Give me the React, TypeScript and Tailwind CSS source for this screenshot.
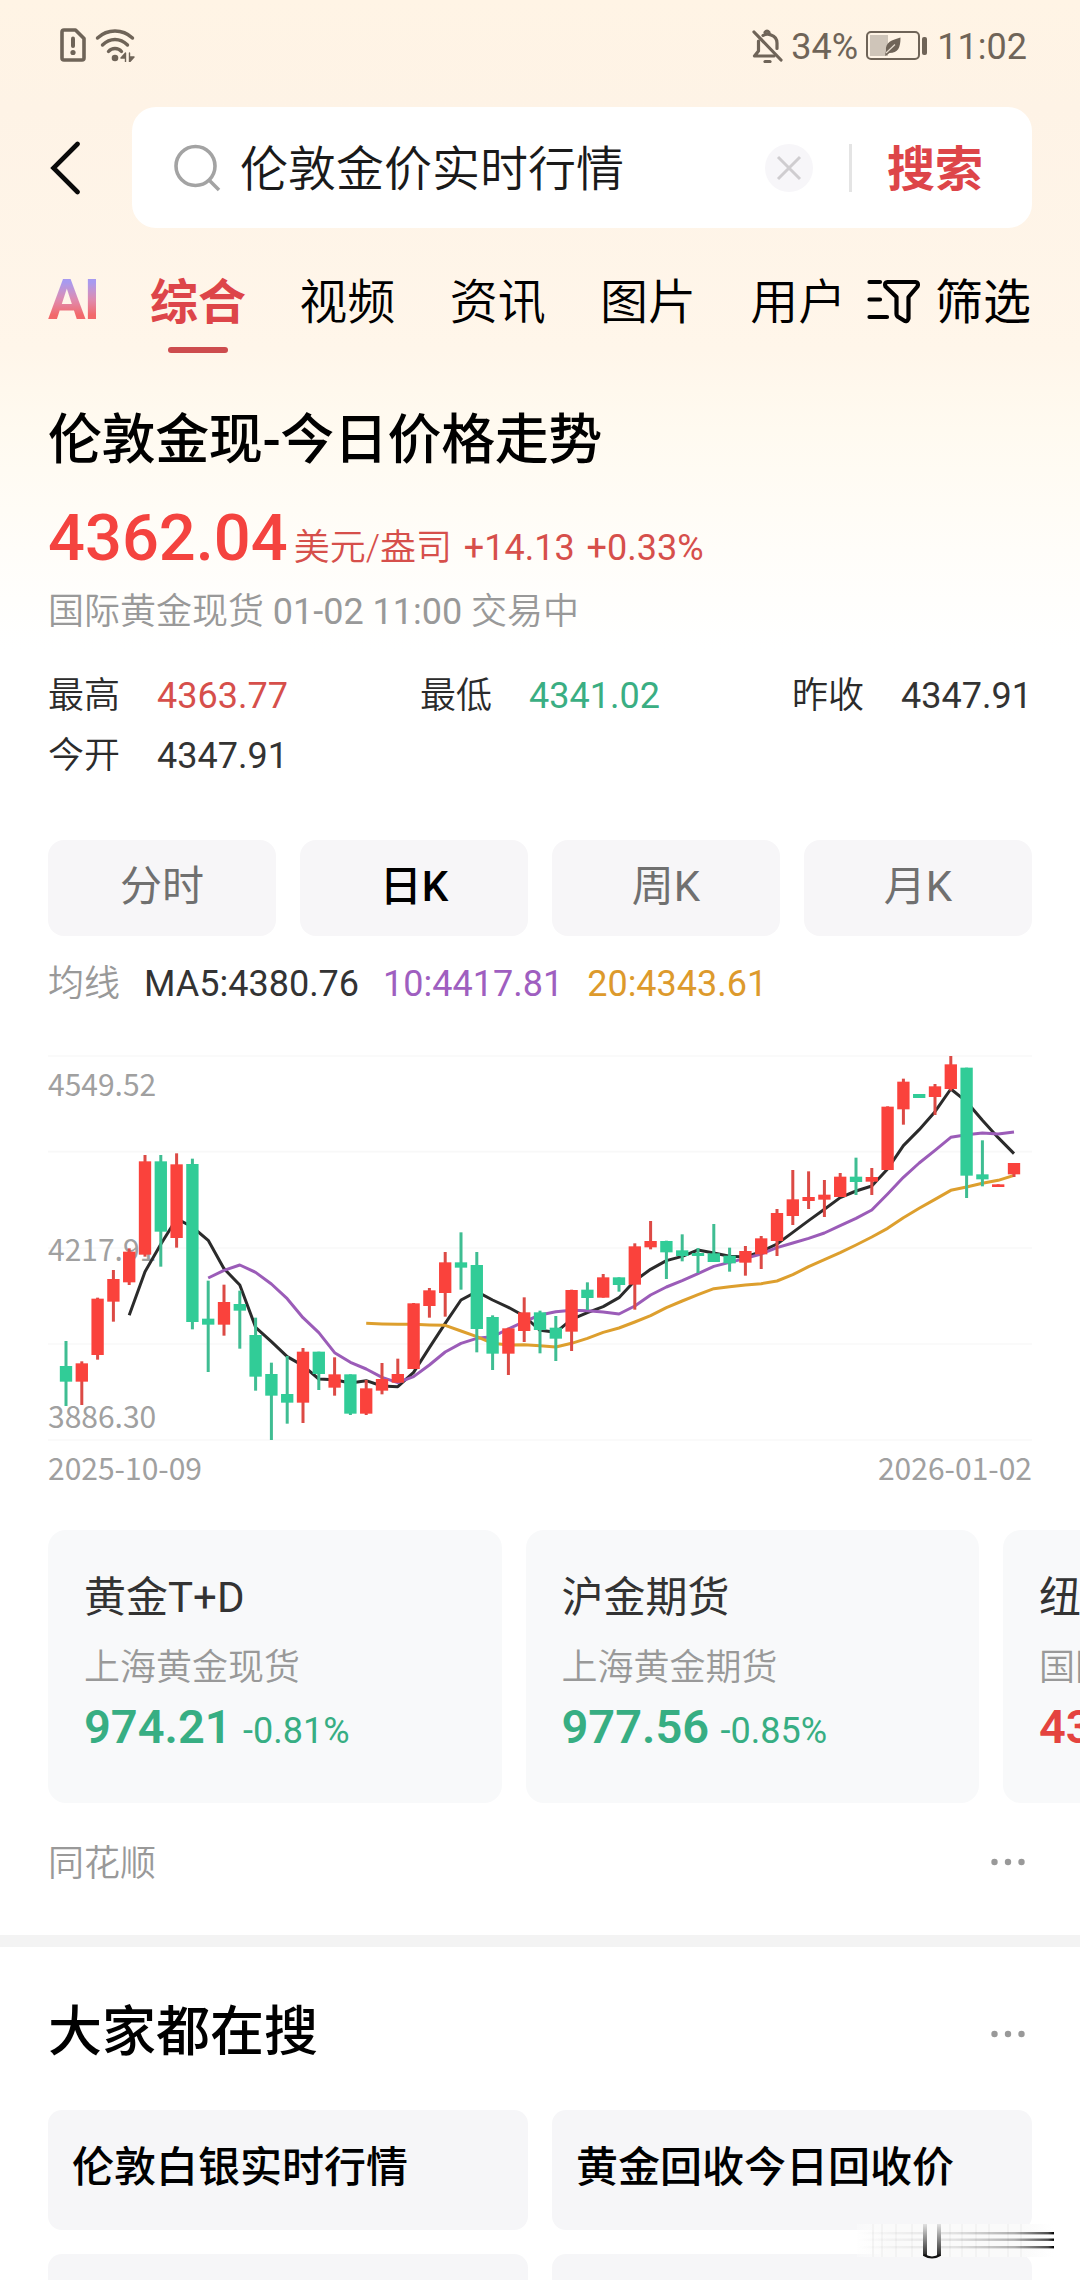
import React from "react";

const RED = "#fa423c";
const GREEN = "#31cc97";

// [high, body top, body bottom, low, rising]
const candles: [number, number, number, number, 0 | 1][] = [
  [903, 978, 1025, 1098, 0],
  [964, 970, 1025, 1095, 1],
  [773, 776, 945, 959, 1],
  [690, 717, 785, 845, 1],
  [625, 635, 727, 735, 1],
  [345, 364, 644, 650, 1],
  [345, 364, 575, 680, 0],
  [340, 373, 594, 623, 1],
  [356, 372, 846, 868, 0],
  [722, 836, 854, 996, 0],
  [734, 786, 854, 887, 1],
  [752, 792, 812, 926, 0],
  [833, 885, 1010, 1052, 0],
  [968, 1002, 1067, 1200, 0],
  [948, 1062, 1088, 1151, 0],
  [924, 935, 1088, 1149, 1],
  [935, 935, 1002, 1050, 0],
  [952, 1003, 1043, 1067, 1],
  [1003, 1003, 1121, 1125, 0],
  [1020, 1045, 1121, 1125, 1],
  [969, 1017, 1052, 1063, 1],
  [956, 1002, 1028, 1028, 1],
  [789, 790, 987, 987, 1],
  [744, 751, 798, 833, 1],
  [636, 667, 759, 830, 1],
  [577, 667, 683, 749, 0],
  [636, 675, 867, 937, 0],
  [826, 831, 941, 990, 0],
  [863, 865, 941, 1005, 1],
  [772, 817, 873, 906, 1],
  [812, 817, 870, 940, 0],
  [828, 863, 896, 963, 0],
  [749, 750, 875, 933, 1],
  [727, 749, 774, 810, 0],
  [702, 712, 773, 773, 1],
  [712, 712, 735, 755, 0],
  [610, 619, 734, 809, 1],
  [543, 603, 622, 628, 1],
  [602, 603, 637, 717, 0],
  [583, 631, 648, 664, 0],
  [624, 639, 648, 699, 0],
  [552, 640, 666, 666, 0],
  [623, 647, 670, 695, 0],
  [618, 633, 668, 707, 1],
  [588, 595, 643, 687, 1],
  [507, 519, 603, 648, 1],
  [390, 478, 528, 555, 1],
  [394, 471, 483, 507, 1],
  [420, 464, 479, 531, 1],
  [399, 410, 471, 471, 1],
  [353, 410, 426, 465, 0],
  [384, 411, 425, 465, 1],
  [199, 200, 390, 390, 1],
  [116, 125, 208, 254, 1],
  [162, 162, 174, 174, 0],
  [132, 139, 171, 225, 1],
  [48, 73, 147, 152, 1],
  [83, 83, 407, 474, 0],
  [301, 403, 418, 439, 0],
  [433, 433, 441, 441, 1],
  [369, 369, 403, 411, 1],
];

const ma5 = [
  826, 695, 613, 536, 561, 601, 686, 735, 862, 905, 950, 977, 1017, 1019, 1029,
  1022, 1038, 1040, 997, 923, 850, 780, 755, 780, 802, 828, 871, 877, 838, 818,
  800, 773, 722, 688, 662, 649, 630, 639, 649, 651, 635, 612, 577, 542, 508,
  473, 453, 438, 387, 317, 269, 215, 147, 185, 241, 293, 341,
];
const ma10 = [
  714, 691, 675, 697, 732, 776, 833, 878, 938, 967, 987, 1012, 1028, 1010, 975,
  936, 910, 895, 890, 867, 845, 825, 815, 811, 812, 816, 822, 798, 765, 741,
  722, 701, 679, 667, 655, 642, 623, 609, 595, 579, 557, 535, 510, 462, 412,
  369, 331, 292, 284, 279, 282, 276,
];
const ma20 = [
  850, 852, 853, 853, 855, 856, 873, 890, 910, 915, 914, 917, 921, 910, 895,
  877, 864, 846, 827, 803, 783, 764, 746, 740, 735, 731, 723, 704, 680, 659,
  638, 615, 591, 565, 533, 505, 478, 451, 441, 430, 421, 406,
];

const candleX = (i: number) => 198 + i * 47.4;

// every average ends on the last candle
const linePoints = (values: number[]) =>
  values
    .map((y, i) => `${candleX(i + candles.length - values.length)},${y}`)
    .join(" ");

const KLineChart = () => (
  <svg width="984" height="460" viewBox="144 0 2952 1380" className="block">
    {[48, 335, 624, 912, 1200].map((y) => (
      <line key={y} x1="144" x2="3096" y1={y} y2={y} stroke="#f8f8f8" strokeWidth="5" />
    ))}
    <g
      fill="#a0a0a0"
      fontSize="90"
      fontFamily="'Noto Sans CJK SC', 'Noto Sans', sans-serif"
    >
      <text x="144" y="167">4549.52</text>
      <text x="144" y="662">4217.91</text>
      <text x="144" y="1163">3886.30</text>
      <text x="144" y="1319">2025-10-09</text>
      <text x="3096" y="1319" textAnchor="end">2026-01-02</text>
    </g>
    <g fill="none" strokeWidth="9" strokeLinejoin="round">
      <polyline points={linePoints(ma5)} stroke="#2b2b2b" />
      <polyline points={linePoints(ma10)} stroke="#9b5cb8" />
      <polyline points={linePoints(ma20)} stroke="#dd9f2e" />
    </g>
    {candles.map(([high, top, bottom, low, rising], i) => (
      <g key={i} fill={rising ? RED : GREEN}>
        <rect
          x={candleX(i) - 4.5}
          y={high}
          width="9"
          height={low - high}
          fill={rising ? "#dc4a45" : "#3fbd92"}
        />
        <rect x={candleX(i) - 18.5} y={top} width="37" height={bottom - top} />
      </g>
    ))}
  </svg>
);

const StatusBar = () => (
  <div className="flex h-[92px] items-center justify-between pl-[60px] pr-[53px] text-[36px] text-[#6f6458]">
    <div className="flex items-center gap-[9px] pb-[3px]">
      <svg width="26" height="34" viewBox="0 0 26 34" fill="none" stroke="currentColor">
        <path d="M4 2H15.500L24 10.500V30Q24 32 22 32H4Q2 32 2 30V4Q2 2 4 2Z" strokeWidth="3.600" strokeLinejoin="round" />
        <path d="M13 10.500V18" strokeWidth="4" strokeLinecap="round" />
        <circle cx="13" cy="24.500" r="2.600" fill="currentColor" stroke="none" />
      </svg>
      <svg width="40" height="34" viewBox="0 0 40 34" fill="none" stroke="currentColor" strokeWidth="3.400" strokeLinecap="round">
        <path d="M2.500 10Q10 3 20 3T37.500 10" />
        <path d="M7.500 17Q13 11.500 20 11.500T32.500 17" />
        <path d="M13.500 23.500Q16 20.500 20 20.500T26.500 23.500" />
        <circle cx="20" cy="30" r="3.300" fill="currentColor" stroke="none" />
        <path d="M30.500 25V34M30.500 25L26 30H30.500ZM34.500 34V25M34.500 34L39 29H34.500Z" fill="currentColor" strokeWidth="1.400" strokeLinejoin="round" />
      </svg>
    </div>
    <div className="flex items-center">
      <svg width="31" height="34" viewBox="0 0 31 34" fill="none" stroke="currentColor" strokeWidth="3.200" strokeLinecap="round">
        <path d="M2 3L29 31" />
        <path d="M6.500 12V22L2.500 27H22" strokeLinejoin="round" />
        <path d="M11 6.500Q15 4 19 6Q25 8 25 14V19.500" />
        <path d="M13 3.500Q15 0.500 17 3.500" />
        <path d="M13 32.500H18" />
      </svg>
      <span className="ml-2 w-[66px] pt-[2px]">34%</span>
      <svg className="ml-[9px]" width="62" height="30" viewBox="0 0 62 30">
        <rect x="1" y="1" width="52" height="27" rx="4" fill="none" stroke="currentColor" strokeWidth="2" />
        <rect x="4" y="4" width="18" height="21" fill="#cfc5b9" />
        <path d="M34.500 6.500C34.500 17 32 22 23.500 22L19.500 25C19 23 19.500 21 20 20C19 11 26 9 34.500 6.500Z" fill="currentColor" />
        <path d="M20 22L29 13.500" stroke="#e6dccf" strokeWidth="1.200" />
        <rect x="56" y="6" width="5" height="18" rx="2" fill="currentColor" />
      </svg>
      <span className="ml-[9px] pt-[2px]">11:02</span>
    </div>
  </div>
);

const SearchBar = () => (
  <div className="mt-[15px] flex items-center pl-[48px] pr-[48px]">
    <svg width="36" height="54" viewBox="0 0 36 54" fill="none" stroke="#0a0a0a" strokeWidth="4.600" strokeLinecap="round" strokeLinejoin="miter">
      <path d="M29.500 3L5.500 27L29.500 51" />
    </svg>
    <div className="ml-[48px] flex h-[121px] flex-1 items-center rounded-[24px] bg-white pl-[42px]">
      <svg width="48" height="48" viewBox="0 0 48 48" fill="none" stroke="#a3a3a3" strokeWidth="3.600">
        <circle cx="21.500" cy="22" r="19.500" />
        <path d="M35 36L45 46" />
      </svg>
      <span className="ml-[18px] pt-[5px] text-[48px] font-[350] leading-[60px] text-[#1a1a1a]">
        伦敦金价实时行情
      </span>
      <svg className="ml-auto" width="48" height="48" viewBox="0 0 48 48">
        <circle cx="24" cy="24" r="24" fill="#f7f6f9" />
        <path d="M13 13L35 35M35 13L13 35" stroke="#cfcdd0" strokeWidth="3" />
      </svg>
      <div className="ml-[36px] h-[48px] w-[3px] bg-[#e4e4e4]" />
      <span className="ml-[35px] mr-[49px] pt-[5px] text-[48px] font-bold leading-[60px] text-[#dd4549]">
        搜索
      </span>
    </div>
  </div>
);

const channels = ["视频", "资讯", "图片", "用户"];

const ChannelTabs = () => (
  <div className="flex h-[132px] items-start pl-[48px] pr-[49px] pt-[45px] text-[48px] font-[350] leading-[60px] text-black">
    <span className="mt-[-3px] w-[48px] bg-linear-to-b from-[#a79af0] from-20% via-[#df8aae] via-50% to-[#f2686a] to-75% bg-clip-text font-[Roboto] text-[56px] font-bold tracking-[-2px] text-transparent">
      AI
    </span>
    <div className="ml-[54px] mr-[-1px] flex flex-col items-center">
      <span className="font-bold text-[#dd4549]">综合</span>
      <div className="mt-[14px] h-[6px] w-[60px] rounded-full bg-[#cd4c4e]" />
    </div>
    {channels.map((name) => (
      <span key={name} className="ml-[54.300px]">
        {name}
      </span>
    ))}
    <div className="ml-auto flex font-normal">
      <svg className="mr-[14px] mt-[5px]" width="54" height="46" viewBox="0 0 54 46" fill="none" stroke="#000" strokeWidth="4.200" strokeLinecap="round" strokeLinejoin="round">
        <path d="M2.500 4H13M2.500 21.500H13M2.500 39H20" />
        <path d="M20.500 4H48.500Q52 4.500 50.500 8.500L41.500 19V40.500Q40 44.500 37 42.500L30.500 38.500Q29.500 37.500 29.500 36V19L18.500 8.500Q17 4.500 20.500 4Z" />
      </svg>
      <span>筛选</span>
    </div>
  </div>
);

const Stat = ({ label, value, color }: { label: string; value: string; color: string }) => (
  <div className="flex w-[240px] justify-between">
    <span className="font-[350] text-[#2b2b2b]">{label}</span>
    <span className={color}>{value}</span>
  </div>
);

const periods = ["分时", "日K", "周K", "月K"];

const Quote = () => (
  <section className="px-[48px]">
    <h1 className="mt-[49px] text-[54px] font-medium leading-[64px] tracking-[-0.400px] text-black">
      伦敦金现-今日价格走势
    </h1>
    <div className="mt-[25px] flex h-[80px] items-baseline text-[36px] leading-[80px] text-[#d64f4b]">
      <span className="text-[65px] font-medium text-[#f4433f]">4362.04</span>
      <span className="ml-[6px] whitespace-pre font-[350] [word-spacing:3px]">
        美元/盎司 <span className="font-normal">+14.13 +0.33%</span>
      </span>
    </div>
    <div className="mt-[12px] text-[36px] font-[350] leading-[44px] text-[#999]">
      国际黄金现货 <span className="font-normal">01-02 11:00</span> 交易中
    </div>
    <div className="mt-[32px] grid grid-cols-[240px_240px_240px] justify-between text-[36px] leading-[60px]">
      <Stat label="最高" value="4363.77" color="text-[#d64f4b]" />
      <Stat label="最低" value="4341.02" color="text-[#3aae83]" />
      <Stat label="昨收" value="4347.91" color="text-[#333]" />
      <Stat label="今开" value="4347.91" color="text-[#333]" />
    </div>

    <div className="mt-[54px] grid grid-cols-4 gap-6">
      {periods.map((name) => (
        <div
          key={name}
          className={
            name === "日K"
              ? "h-24 rounded-2xl bg-[#f7f6f8] text-center text-[42px] font-medium leading-[94px] text-black"
              : "h-24 rounded-2xl bg-[#f7f6f8] text-center text-[42px] leading-[94px] text-[#707070]"
          }
        >
          {name}
        </div>
      ))}
    </div>

    <div className="mt-[26px] flex h-[44px] text-[36px] leading-[44px]">
      <span className="font-[350] text-[#999]">均线</span>
      <span className="ml-[24px] text-[#333]">MA5:4380.76</span>
      <span className="ml-[24px] text-[#9f5fc0]">10:4417.81</span>
      <span className="ml-[24px] text-[#dd9a2c]">20:4343.61</span>
    </div>
    <div className="mt-[34px]">
      <KLineChart />
    </div>
  </section>
);

const Dots = () => (
  <svg width="34" height="8" viewBox="0 0 34 8" fill="#999">
    <circle cx="3.500" cy="4" r="3.200" />
    <circle cx="17" cy="4" r="3.200" />
    <circle cx="30.500" cy="4" r="3.200" />
  </svg>
);

const contracts = [
  { name: "黄金T+D", market: "上海黄金现货", price: "974.21", change: "-0.81%", up: false },
  { name: "沪金期货", market: "上海黄金期货", price: "977.56", change: "-0.85%", up: false },
  { name: "纽约金", market: "国际黄金期货", price: "4377.10", change: "+0.83%", up: true },
];

const Contracts = () => (
  <section>
    <div className="mt-[30px] flex gap-6 overflow-hidden pl-[48px]">
      {contracts.map((c) => (
        <div
          key={c.name}
          className="h-[273px] w-[453.500px] shrink-0 rounded-[18px] bg-[#f8f9fa] px-[36px] pt-[38px]"
        >
          <div className="text-[42px] leading-[60px] text-[#333]">{c.name}</div>
          <div className="mt-[18px] text-[36px] font-[350] leading-[44px] text-[#999]">
            {c.market}
          </div>
          <div
            className={
              c.up
                ? "mt-[7px] flex items-baseline leading-[60px] text-[#e4433f]"
                : "mt-[7px] flex items-baseline leading-[60px] text-[#37ae83]"
            }
          >
            <span className="min-w-[148px] text-[47px] font-semibold">{c.price}</span>
            <span className="ml-[11px] text-[36px]">{c.change}</span>
          </div>
        </div>
      ))}
    </div>
    <div className="mt-[37px] flex h-[44px] items-center justify-between pl-[48px] pr-[55px]">
      <span className="pt-[3px] text-[36px] font-[350] leading-[44px] text-[#999]">同花顺</span>
      <Dots />
    </div>
  </section>
);

const keywords = ["伦敦白银实时行情", "黄金回收今日回收价", "", ""];

const TrendingSearches = () => (
  <section className="mt-[51px] border-t-[12px] border-[#f3f3f3]">
    <div className="mt-[54px] flex h-[64px] items-center justify-between pl-[48px] pr-[55px]">
      <h2 className="text-[54px] font-medium leading-[64px] text-black">大家都在搜</h2>
      <div className="pt-[2px]">
        <Dots />
      </div>
    </div>
    <div className="mt-[45px] grid grid-cols-2 gap-6 px-[48px]">
      {keywords.map((word, i) => (
        <div
          key={i}
          className="h-[120px] rounded-[14px] bg-[#f6f6f8] pl-6 text-[42px] font-medium leading-[115px] text-black"
        >
          {word}
        </div>
      ))}
    </div>
  </section>
);

// smeared mark lying over the lower right corner
const CornerMark = () => (
  <svg className="absolute left-[857px] top-[2224px]" width="200" height="36" viewBox="0 0 200 36">
    <defs>
      <linearGradient id="fade" x1="0" x2="1" y1="0" y2="0">
        <stop offset="0" stopColor="#000" stopOpacity="0" />
        <stop offset="0.500" stopColor="#000" stopOpacity="0.100" />
        <stop offset="0.800" stopColor="#000" stopOpacity="0.300" />
        <stop offset="0.970" stopColor="#000" stopOpacity="0.700" />
        <stop offset="1" stopColor="#000" />
      </linearGradient>
      <linearGradient id="drop" x1="0" x2="0" y1="0" y2="1">
        <stop offset="0" stopColor="#000" stopOpacity="0.100" />
        <stop offset="1" stopColor="#000" stopOpacity="0.850" />
      </linearGradient>
      <linearGradient id="paper" x1="0" x2="1" y1="0" y2="0">
        <stop offset="0" stopColor="#fdfdfd" stopOpacity="0.300" />
        <stop offset="0.150" stopColor="#fafafa" />
        <stop offset="0.850" stopColor="#fafafa" />
        <stop offset="1" stopColor="#fff" />
      </linearGradient>
    </defs>
    <rect width="196" height="33" fill="url(#paper)" />
    {[15, 24, 38, 54, 92, 104, 118, 131, 150, 163].map((x) => (
      <rect key={x} x={x} width="2" height="33" fill="#f3f3f3" />
    ))}
    {[8, 14.5, 22].map((y) => (
      <rect key={y} y={y} width="197" height="2.400" fill="url(#fade)" />
    ))}
    <rect x="66" width="18" height="33" fill="#fbfbfb" />
    <rect x="66" width="4" height="32" fill="url(#drop)" />
    <rect x="80" width="4" height="32" fill="url(#drop)" />
    <path d="M67 31Q75 36 83 31" fill="none" stroke="#111" strokeWidth="2.200" />
  </svg>
);

export default function App() {
  return (
    <div className="relative h-[2280px] w-[1080px] overflow-hidden bg-white bg-[linear-gradient(180deg,#fff4e5_0px,#fef3e6_110px,#fff6ea_350px,#fffaf0_430px,#fffdf9_550px,#ffffff_650px)] font-[Roboto,'Noto_Sans_CJK_SC',sans-serif]">
      <StatusBar />
      <SearchBar />
      <ChannelTabs />
      <Quote />
      <Contracts />
      <TrendingSearches />
      <CornerMark />
    </div>
  );
}
